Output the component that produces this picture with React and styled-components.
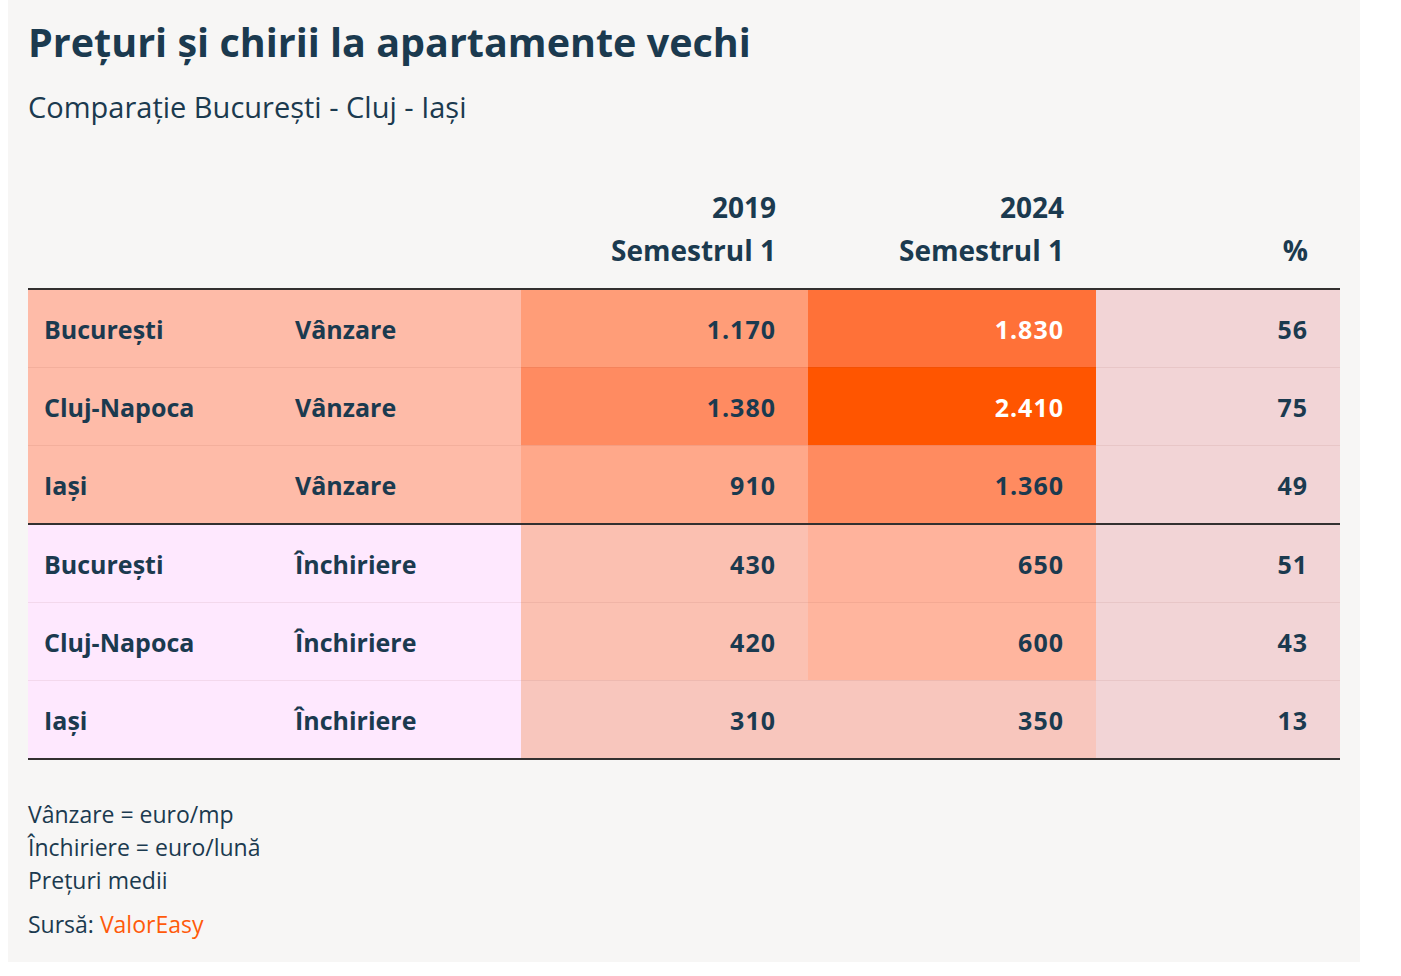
import React from "react";
import styled, { createGlobalStyle } from "styled-components";

const GlobalStyle = createGlobalStyle`
  html, body {
    margin: 0;
    padding: 0;
    background: #ffffff;
  }
  body {
    font-family: "Open Sans", "Noto Sans", sans-serif;
    color: #1b3a4f;
  }
`;

const Page = styled.div`
  padding-left: 8px;
`;

const Card = styled.div`
  box-sizing: border-box;
  width: 1352px;
  height: 962px;
  padding: 20px;
  background: #f7f6f5;
`;

const Title = styled.h1`
  margin: 0;
  font-size: 39.5px;
  line-height: 45px;
  font-weight: 700;
  color: #1b3a4f;
`;

const Subtitle = styled.p`
  margin: 25px 0 0;
  font-size: 29px;
  line-height: 34px;
  font-weight: 400;
  color: #1b3a4f;
`;

const Table = styled.div`
  display: grid;
  grid-template-columns: 251px 242px 287px 288px 244px;
  margin-top: 62px;
`;

const HeadCell = styled.div`
  padding: 0 32px 16px 16px;
  font-size: 28px;
  line-height: 43px;
  font-weight: 700;
  text-align: ${(p) => (p.$right ? "right" : "left")};
  border-bottom: 2px solid #333030;
  display: flex;
  flex-direction: column;
  justify-content: flex-end;
`;

const Cell = styled.div`
  height: 77px;
  display: flex;
  align-items: center;
  justify-content: ${(p) => (p.$right ? "flex-end" : "flex-start")};
  padding: 0 32px 0 16px;
  font-size: 25px;
  font-weight: 700;
  letter-spacing: ${(p) => (p.$right ? "1px" : "0")};
  background: ${(p) => p.$bg};
  color: ${(p) => (p.$light ? "#ffffff" : "#1b3a4f")};
  border-top: ${(p) =>
    p.$thick ? "2px solid #333030" : p.$first ? "none" : "1px solid rgba(120, 40, 30, 0.08)"};
  border-bottom: ${(p) => (p.$last ? "2px solid #333030" : "none")};
`;

const Notes = styled.div`
  margin-top: 38px;
  font-size: 23px;
  line-height: 33px;
  color: #1b3a4f;
`;

const Source = styled.div`
  margin-top: 11px;
  font-size: 23px;
  line-height: 33px;
  color: #1b3a4f;
`;

const SourceLink = styled.span`
  color: #ff5a0a;
`;

const SALE = "#febba8";
const RENT = "#fee8fe";
const PCT = "#f2d4d6";

const rows = [
  { city: "București", type: "Vânzare", a: "1.170", aBg: "#ff9d78", b: "1.830", bBg: "#ff7138", bLight: true, p: "56", bg: SALE },
  { city: "Cluj-Napoca", type: "Vânzare", a: "1.380", aBg: "#ff8b61", b: "2.410", bBg: "#ff5500", bLight: true, p: "75", bg: SALE },
  { city: "Iași", type: "Vânzare", a: "910", aBg: "#ffa88a", b: "1.360", bBg: "#ff8b60", p: "49", bg: SALE },
  { city: "București", type: "Închiriere", a: "430", aBg: "#fbc0b1", b: "650", bBg: "#ffb39c", p: "51", bg: RENT, thick: true },
  { city: "Cluj-Napoca", type: "Închiriere", a: "420", aBg: "#fbc1b2", b: "600", bBg: "#ffb59e", p: "43", bg: RENT },
  { city: "Iași", type: "Închiriere", a: "310", aBg: "#f8c6bd", b: "350", bBg: "#f8c6bd", p: "13", bg: RENT, last: true },
];

export default function App() {
  return (
    <Page>
      <GlobalStyle />
      <Card>
        <Title>Prețuri și chirii la apartamente vechi</Title>
        <Subtitle>Comparație București - Cluj - Iași</Subtitle>
        <Table>
          <HeadCell />
          <HeadCell />
          <HeadCell $right>
            <span>2019</span>
            <span>Semestrul 1</span>
          </HeadCell>
          <HeadCell $right>
            <span>2024</span>
            <span>Semestrul 1</span>
          </HeadCell>
          <HeadCell $right>
            <span>%</span>
          </HeadCell>
          {rows.map((r, i) => {
            const edge = { $first: i === 0, $thick: r.thick, $last: r.last };
            return (
              <React.Fragment key={i}>
                <Cell $bg={r.bg} {...edge}>{r.city}</Cell>
                <Cell $bg={r.bg} {...edge}>{r.type}</Cell>
                <Cell $bg={r.aBg} $right {...edge}>{r.a}</Cell>
                <Cell $bg={r.bBg} $right $light={r.bLight} {...edge}>{r.b}</Cell>
                <Cell $bg={PCT} $right {...edge}>{r.p}</Cell>
              </React.Fragment>
            );
          })}
        </Table>
        <Notes>
          <div>Vânzare = euro/mp</div>
          <div>Închiriere = euro/lună</div>
          <div>Prețuri medii</div>
        </Notes>
        <Source>
          Sursă: <SourceLink>ValorEasy</SourceLink>
        </Source>
      </Card>
    </Page>
  );
}
